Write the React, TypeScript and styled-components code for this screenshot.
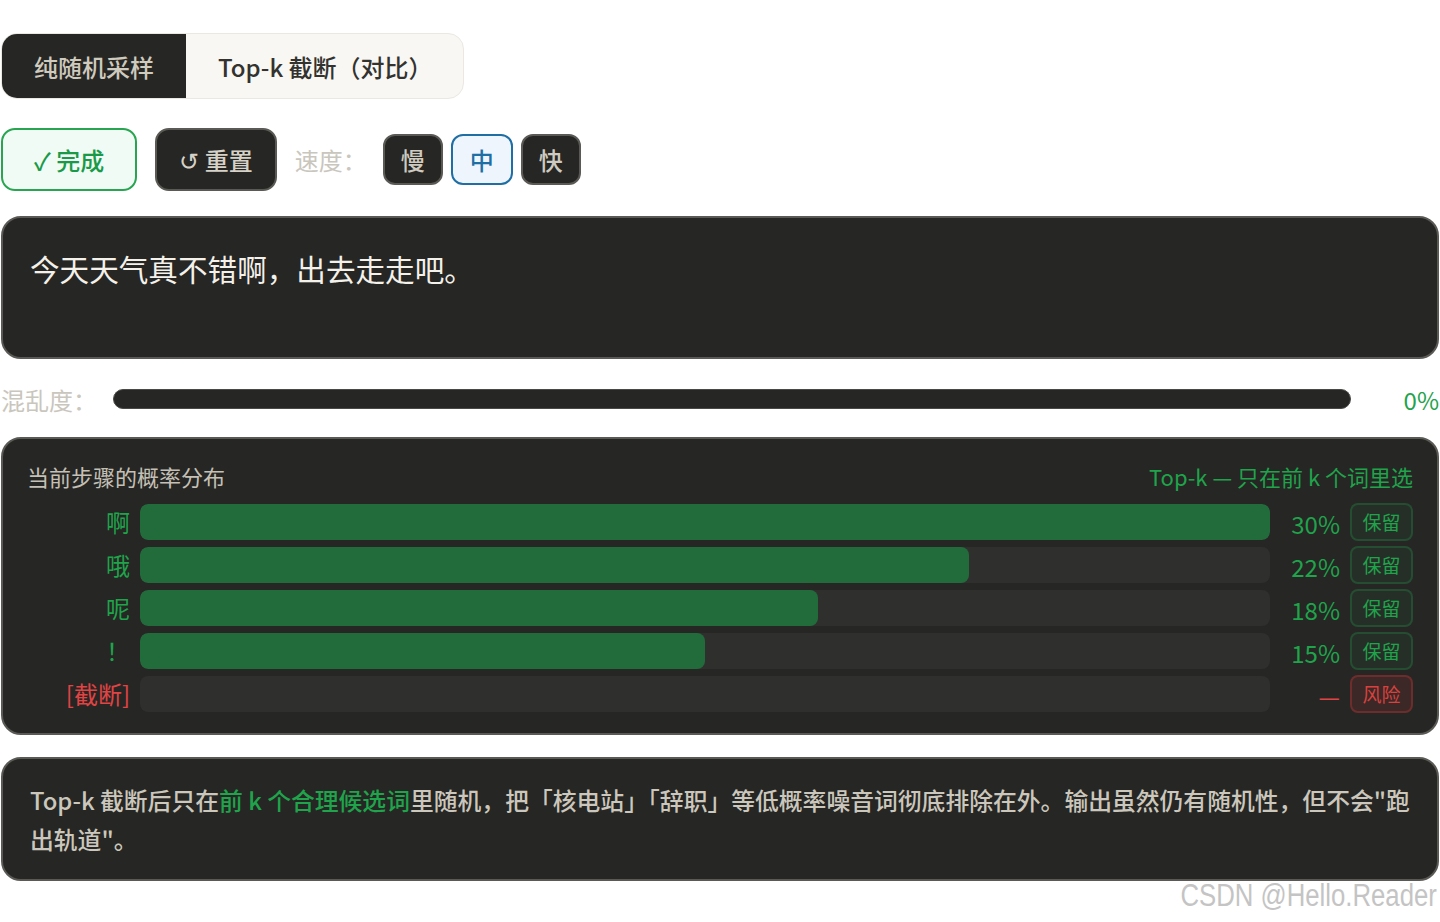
import styled, { createGlobalStyle } from "styled-components";

const GlobalStyle = createGlobalStyle`
  body {
    margin: 0;
    background: #ffffff;
    font-family: "Noto Sans CJK SC", "Noto Sans", sans-serif;
  }
  * { box-sizing: border-box; }
`;

type Candidate = {
  token: string;
  prob: number;
  cut?: boolean;
};

const candidates: Candidate[] = [
  { token: "啊", prob: 30 },
  { token: "哦", prob: 22 },
  { token: "呢", prob: 18 },
  { token: "！", prob: 15 },
  { token: "[截断]", prob: 0, cut: true },
];

const maxProb = Math.max(...candidates.map((c) => c.prob));

const App = () => {
  return (
    <Page>
      <GlobalStyle />
      <Tabs>
        <Tab $active>纯随机采样</Tab>
        <Tab>Top-k 截断（对比）</Tab>
      </Tabs>

      <Controls>
        <ActionButton $variant="done">✓ 完成</ActionButton>
        <ActionButton $variant="dark">↺ 重置</ActionButton>
        <MutedLabel>速度：</MutedLabel>
        <SpeedGroup>
          <SpeedButton>慢</SpeedButton>
          <SpeedButton $active>中</SpeedButton>
          <SpeedButton>快</SpeedButton>
        </SpeedGroup>
      </Controls>

      <OutputCard>今天天气真不错啊，出去走走吧。</OutputCard>

      <ChaosRow>
        <MutedLabel>混乱度：</MutedLabel>
        <ChaosTrack />
        <ChaosValue>0%</ChaosValue>
      </ChaosRow>

      <DistCard>
        <DistHeader>
          <DistTitle>当前步骤的概率分布</DistTitle>
          <DistMode>Top-k — 只在前 k 个词里选</DistMode>
        </DistHeader>
        <DistGrid>
          {candidates.map((c) => (
            <DistRow key={c.token}>
              <TokenLabel $cut={c.cut}>{c.token}</TokenLabel>
              <BarTrack>
                <BarFill style={{ width: `${(c.prob / maxProb) * 100}%` }} />
              </BarTrack>
              <ProbValue $cut={c.cut}>{c.cut ? "—" : `${c.prob}%`}</ProbValue>
              <Badge $cut={c.cut}>{c.cut ? "风险" : "保留"}</Badge>
            </DistRow>
          ))}
        </DistGrid>
      </DistCard>

      <NoteCard>
        Top-k 截断后只在<Highlight>前 k 个合理候选词</Highlight>里随机，把「核电站」「辞职」等低概率噪音词彻底排除在外。输出虽然仍有随机性，但不会"跑出轨道"。
      </NoteCard>

      <Watermark>CSDN @Hello.Reader</Watermark>
    </Page>
  );
};

const Page = styled.div`
  display: flex;
  flex-direction: column;
  width: 1440px;
  padding: 33px 1px 0 1px;
`;

const Tabs = styled.div`
  display: inline-flex;
  align-self: flex-start;
  height: 66px;
  border: 1px solid #ebe8e2;
  border-radius: 16px;
  background: #f8f7f3;
  overflow: hidden;
`;

const Tab = styled.div<{ $active?: boolean }>`
  display: flex;
  align-items: center;
  padding: ${(p) => (p.$active ? "0 32px" : "0 30px 0 32px")};
  font-size: 24px;
  font-weight: 500;
  color: ${(p) => (p.$active ? "#cfcabe" : "#33322f")};
  background: ${(p) => (p.$active ? "#262624" : "transparent")};
`;

const Controls = styled.div`
  display: flex;
  align-items: center;
  margin-top: 29px;
  height: 63px;
`;

const ActionButton = styled.div<{ $variant: "done" | "dark" }>`
  display: flex;
  align-items: center;
  justify-content: center;
  height: 63px;
  margin-right: 18px;
  padding: ${(p) => (p.$variant === "done" ? "0 31px" : "0 22px")};
  border-radius: 14px;
  font-size: 24px;
  font-weight: 500;
  border: 2px solid ${(p) => (p.$variant === "done" ? "#27a550" : "#5a5955")};
  background: ${(p) => (p.$variant === "done" ? "#f0fbf5" : "#262624")};
  color: ${(p) => (p.$variant === "done" ? "#1a9a48" : "#d6d2c8")};
`;

const MutedLabel = styled.span`
  font-size: 24px;
  color: #c9c6bd;
  white-space: nowrap;
`;

const SpeedGroup = styled.div`
  display: flex;
  gap: 8px;
  margin-left: 16px;
`;

const SpeedButton = styled.div<{ $active?: boolean }>`
  display: flex;
  align-items: center;
  justify-content: center;
  width: ${(p) => (p.$active ? "62px" : "60px")};
  height: 51px;
  border-radius: 12px;
  font-size: 24px;
  font-weight: 500;
  border: 2px solid ${(p) => (p.$active ? "#1f6fa5" : "#5a5955")};
  background: ${(p) => (p.$active ? "#eef5fd" : "#262624")};
  color: ${(p) => (p.$active ? "#1f6fa5" : "#cfcabf")};
`;

const DarkCard = styled.div`
  background: #262624;
  border: 2px solid #5a5955;
  border-radius: 20px;
`;

const OutputCard = styled(DarkCard)`
  margin-top: 25px;
  min-height: 143px;
  padding: 28px 27px;
  font-size: 29.6px;
  line-height: 46px;
  color: #f4f1ea;
`;

const ChaosRow = styled.div`
  display: flex;
  align-items: center;
  gap: 16px;
  height: 32px;
  margin-top: 24px;

  ${MutedLabel} {
    width: 96px;
  }
`;

const ChaosTrack = styled.div`
  flex: 1;
  height: 20px;
  border-radius: 10px;
  background: #262624;
  border: 1.5px solid #4a4946;
`;

const ChaosValue = styled.span`
  width: 72px;
  text-align: right;
  font-size: 24px;
  color: #1fa34b;
`;

const DistCard = styled(DarkCard)`
  margin-top: 22px;
  padding: 21px 24px 21px;
`;

const DistHeader = styled.div`
  display: flex;
  justify-content: space-between;
  align-items: center;
  height: 31px;
  margin-bottom: 11px;
`;

const DistTitle = styled.span`
  font-size: 22px;
  color: #c4c0b6;
`;

const DistMode = styled.span`
  font-size: 22px;
  color: #1fa34b;
`;

const DistGrid = styled.div`
  display: flex;
  flex-direction: column;
  gap: 5px;
`;

const DistRow = styled.div`
  display: grid;
  grid-template-columns: 103px 1fr 60px 63px;
  column-gap: 10px;
  align-items: center;
  height: 38px;
`;

const TokenLabel = styled.span<{ $cut?: boolean }>`
  text-align: right;
  font-size: 24px;
  color: ${(p) => (p.$cut ? "#e04444" : "#1fa34b")};
`;

const BarTrack = styled.div`
  height: 36px;
  border-radius: 8px;
  background: #2f2f2d;
  overflow: hidden;
`;

const BarFill = styled.div`
  height: 100%;
  border-radius: 8px;
  background: #226c3c;
`;

const ProbValue = styled.span<{ $cut?: boolean }>`
  text-align: right;
  font-size: 24px;
  padding-top: 4px;
  color: ${(p) => (p.$cut ? "#e04444" : "#1fa34b")};
`;

const Badge = styled.span<{ $cut?: boolean }>`
  display: flex;
  align-items: center;
  justify-content: center;
  height: 38px;
  border-radius: 8px;
  font-size: 19px;
  border: 2px solid ${(p) => (p.$cut ? "rgba(200, 55, 55, 0.35)" : "rgba(34, 150, 72, 0.3)")};
  background: ${(p) => (p.$cut ? "rgba(200, 55, 55, 0.14)" : "rgba(34, 150, 72, 0.08)")};
  color: ${(p) => (p.$cut ? "#d9413f" : "#1fa34b")};
`;

const NoteCard = styled(DarkCard)`
  margin-top: 22px;
  padding: 21px 22px 21px 27px;
  font-size: 23.8px;
  font-weight: 500;
  line-height: 39px;
  color: #cbc7bc;
`;

const Highlight = styled.span`
  color: #1fa34b;
`;

const Watermark = styled.div`
  align-self: flex-end;
  margin-right: 2px;
  font-family: "Liberation Sans", sans-serif;
  font-size: 31px;
  line-height: 30px;
  color: #c4c4c4;
  transform: scaleX(0.83);
  transform-origin: right center;
`;

export default App;
